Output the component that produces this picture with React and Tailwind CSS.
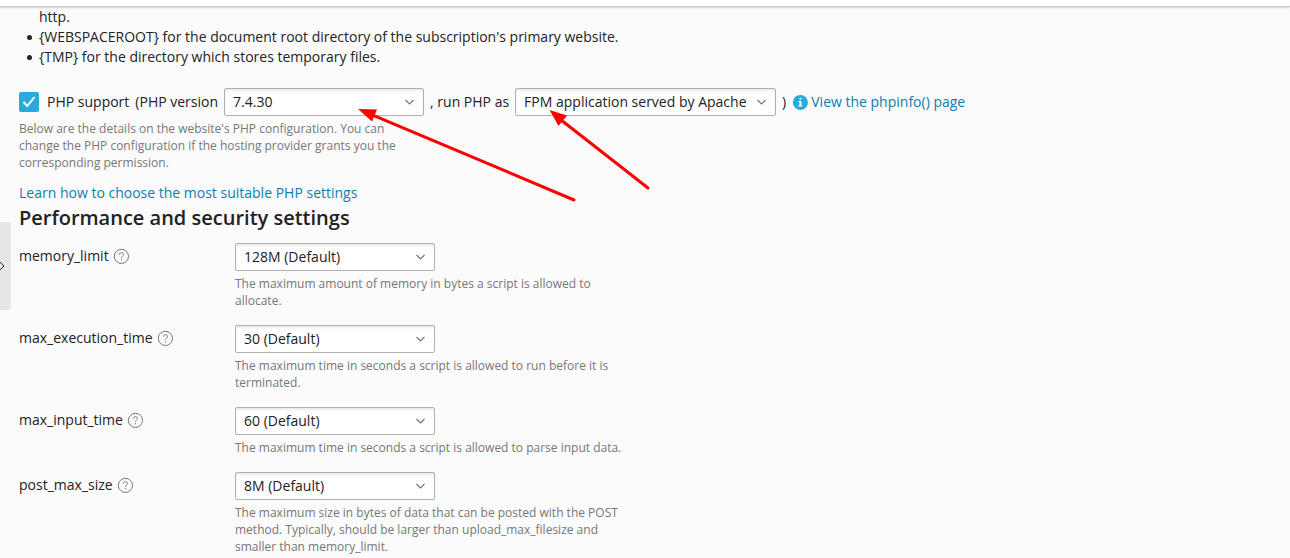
import React from "react";

const settings = [
  {
    name: "memory_limit",
    value: "128M (Default)",
    help: "The maximum amount of memory in bytes a script is allowed to allocate.",
  },
  {
    name: "max_execution_time",
    value: "30 (Default)",
    help: "The maximum time in seconds a script is allowed to run before it is terminated.",
  },
  {
    name: "max_input_time",
    value: "60 (Default)",
    help: "The maximum time in seconds a script is allowed to parse input data.",
  },
  {
    name: "post_max_size",
    value: "8M (Default)",
    help: "The maximum size in bytes of data that can be posted with the POST method. Typically, should be larger than upload_max_filesize and smaller than memory_limit.",
  },
];

function Select({ id, value, width = "w-[200px]" }) {
  return (
    <span className={`relative inline-block h-7 shrink-0 ${width}`}>
      <select
        id={id}
        defaultValue={value}
        className="h-7 w-full appearance-none rounded-[2px] border border-[#b0b0b0] bg-white pr-7 pl-2 text-sm leading-5 text-[#222] shadow-[inset_0_2px_2px_rgba(0,0,0,0.08)]"
      >
        <option>{value}</option>
      </select>
      <svg
        className="pointer-events-none absolute top-1.5 right-1.5 size-4"
        viewBox="0 0 16 16"
        fill="none"
        stroke="#777"
        strokeWidth="1.2"
        aria-hidden="true"
      >
        <path d="M3.500 6 7.500 10 11.500 6" />
      </svg>
    </span>
  );
}

function HelpIcon() {
  return (
    <svg className="block size-4" viewBox="0 0 16 16" fill="none" stroke="#777" aria-hidden="true">
      <circle cx="8.400" cy="8.400" r="7.100" />
      <path d="M6.300 6.700C6.300 5.400 7.200 4.700 8.400 4.700s2.100.8 2.100 1.900c0 1.500-2.100 1.600-2.100 3.200" />
      <path d="M8.400 11v1.200" />
    </svg>
  );
}

function Arrows() {
  return (
    <svg
      className="pointer-events-none absolute top-[100px] left-[350px] h-[110px] w-[310px]"
      viewBox="350 100 310 110"
      fill="#fe0000"
      stroke="#fe0000"
      strokeWidth="3"
      strokeLinecap="round"
      aria-hidden="true"
    >
      <path d="M374 115.600 574 200" />
      <path d="M563 121.500 648 188" />
      <path stroke="none" d="M358 109 377 109.600 372 121.500Z" />
      <path stroke="none" d="M549.500 110 567 115.500 558.500 126Z" />
    </svg>
  );
}

export default function App() {
  return (
    <div className="relative min-h-screen bg-[#fbfbfb] font-['Open_Sans',sans-serif] text-sm leading-5 text-[#222]">
      <header className="h-[7px] border-b border-[#c8c8c8] bg-white shadow-[0_1px_2px_rgba(0,0,0,0.15)]" />

      <button
        type="button"
        aria-label="Open sidebar"
        className="absolute top-[222px] left-0 flex h-[88px] w-[11px] items-center overflow-hidden rounded-r-[3px] bg-[#e6e6e6]"
      >
        <svg className="h-3 w-1.5" viewBox="0 0 6 12" fill="none" stroke="#222" aria-hidden="true">
          <path d="M-.5 1.500 4 6-.5 10.500" />
        </svg>
      </button>

      <main className="px-[19px]">
        <ul className="list-none">
          <li className="pl-5">http.</li>
          <li className="flex items-center">
            <span className="mr-[7px] ml-2 size-[5px] rounded-full bg-[#222]" aria-hidden="true" />
            {"{WEBSPACEROOT} for the document root directory of the subscription's primary website."}
          </li>
          <li className="flex items-center">
            <span className="mr-[7px] ml-2 size-[5px] rounded-full bg-[#222]" aria-hidden="true" />
            {"{TMP} for the directory which stores temporary files."}
          </li>
        </ul>

        <div className="mt-[21px] flex flex-wrap items-center gap-x-1.5">
          <label className="flex items-center gap-2">
            <span className="relative size-5">
              <input
                type="checkbox"
                defaultChecked
                className="block size-5 appearance-none rounded-[2px] bg-[#28aade]"
              />
              <svg
                className="pointer-events-none absolute inset-0 size-5"
                viewBox="0 0 20 20"
                fill="none"
                stroke="#fff"
                strokeWidth="2"
                aria-hidden="true"
              >
                <path d="M4.500 10 8.300 14 15.500 5" />
              </svg>
            </span>
            PHP support
          </label>
          <label htmlFor="php-version">(PHP version</label>
          <Select id="php-version" value="7.4.30" />
          <label htmlFor="php-handler">, run PHP as</label>
          <Select id="php-handler" value="FPM application served by Apache" width="w-[261px]" />
          <span>)</span>
          <a href="#phpinfo" className="flex items-center gap-[3px] text-[#0a7fb0]">
            <svg className="size-4" viewBox="0 0 16 16" aria-hidden="true">
              <circle cx="8.400" cy="8.400" r="7.500" fill="#28aade" />
              <path d="M7.400 3.900h2v1.700h-2ZM6.400 6.900h3v4.500h1v1h-4v-1h1V7.900h-1Z" fill="#fff" />
            </svg>
            View the phpinfo() page
          </a>
        </div>

        <p className="mt-1 max-w-[390px] text-xs leading-[17px] text-[#777]">
          Below are the details on the website's PHP configuration. You can change the PHP
          configuration if the hosting provider grants you the corresponding permission.
        </p>

        <a href="#php-settings" className="mt-3 block w-fit text-[#0a7fb0]">
          Learn how to choose the most suitable PHP settings
        </a>

        <h2 className="text-xl leading-[30px] font-semibold">Performance and security settings</h2>

        <div className="mt-2.5 flex flex-col gap-4">
          {settings.map((s) => (
            <div key={s.name} className="flex items-start">
              <div className="flex w-[216px] shrink-0 items-center gap-1 pt-[3px]">
                <label htmlFor={s.name}>{s.name}</label>
                <button type="button" aria-label={`About ${s.name}`}>
                  <HelpIcon />
                </button>
              </div>
              <div className="max-w-[390px]">
                <div className="flex">
                  <Select id={s.name} value={s.value} />
                </div>
                <p className="mt-1 text-xs leading-[17px] text-[#777]">{s.help}</p>
              </div>
            </div>
          ))}
        </div>
      </main>

      <Arrows />
    </div>
  );
}
